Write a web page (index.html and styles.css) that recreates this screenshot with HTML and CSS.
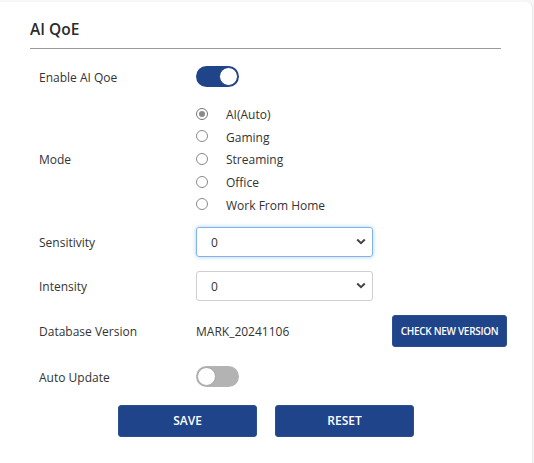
FILE: index.html
```html
<!DOCTYPE html>
<html>
<head>
<meta charset="utf-8">
<link rel="stylesheet" href="styles.css">
</head>
<body>
<div class="card">
  <div class="title">AI QoE</div>
  <div class="form">
    <div class="row r-enable">
      <div class="label">Enable AI Qoe</div>
      <div class="toggle on"><span class="knob"></span></div>
    </div>
    <div class="row r-mode">
      <div class="label">Mode</div>
      <div class="radios">
        <div class="opt"><span class="radio checked"></span><span class="txt">AI(Auto)</span></div>
        <div class="opt"><span class="radio"></span><span class="txt">Gaming</span></div>
        <div class="opt"><span class="radio"></span><span class="txt">Streaming</span></div>
        <div class="opt"><span class="radio"></span><span class="txt">Office</span></div>
        <div class="opt"><span class="radio"></span><span class="txt">Work From Home</span></div>
      </div>
    </div>
    <div class="row r-sens">
      <div class="label">Sensitivity</div>
      <div class="select focus"><span class="txt">0</span><svg width="10" height="7" viewBox="0 0 10 7"><path d="M1.2 1.5L5 5.2 8.8 1.5" fill="none" stroke="#444" stroke-width="2"/></svg></div>
    </div>
    <div class="row r-int">
      <div class="label">Intensity</div>
      <div class="select"><span class="txt">0</span><svg width="10" height="7" viewBox="0 0 10 7"><path d="M1.2 1.5L5 5.2 8.8 1.5" fill="none" stroke="#444" stroke-width="2"/></svg></div>
    </div>
    <div class="row r-db">
      <div class="label">Database Version</div>
      <div class="value">MARK_20241106</div>
      <button class="btn small">CHECK NEW VERSION</button>
    </div>
    <div class="row r-auto">
      <div class="label">Auto Update</div>
      <div class="toggle off"><span class="knob"></span></div>
    </div>
    <div class="actions">
      <button class="btn big">SAVE</button>
      <button class="btn big">RESET</button>
    </div>
  </div>
</div>
</body>
</html>
```
FILE: styles.css
```css
html, body {
  margin: 0;
  padding: 0;
  background: #f7f7f7;
  font-family: "Open Sans", "Noto Sans", sans-serif;
  color: #333;
}
.card {
  margin-top: 2px;
  width: 532px;
  min-height: 461px;
  background: #fff;
  border-top-right-radius: 6px;
  box-shadow: 1px 0 1px rgba(0,0,0,0.06);
  padding-top: 17px;
  box-sizing: border-box;
}
.title {
  margin: 0 31px 0 30px;
  font-size: 15.5px;
  font-weight: 600;
  line-height: 20px;
  padding-bottom: 9px;
  border-bottom: 1px solid #9a9a9a;
  color: #2b2b2b;
}
.form {
  display: flex;
  flex-direction: column;
}
.row {
  display: flex;
  align-items: center;
  padding-left: 39px;
  font-size: 12px;
}
.label {
  width: 157px;
  flex: none;
  line-height: 16px;
  padding-top: 3px;
}
.txt {
  display: inline-block;
  line-height: 16px;
  padding-top: 3px;
}
.r-enable { margin-top: 17px; height: 20px; }
.r-mode { margin-top: 16.5px; }
.r-sens { margin-top: 11.5px; height: 30px; }
.r-int { margin-top: 14px; height: 30px; }
.r-db { margin-top: 14px; height: 32px; }
.r-auto { margin-top: 19px; height: 21px; }

.toggle {
  width: 43px;
  height: 21px;
  border-radius: 11px;
  box-sizing: border-box;
  display: flex;
  align-items: center;
  padding: 0 1px;
}
.toggle.on { background: #1f4489; justify-content: flex-end; }
.toggle.off { background: #b3b3b3; justify-content: flex-start; }
.knob {
  width: 19px;
  height: 19px;
  border-radius: 50%;
  background: #fff;
  box-sizing: border-box;
}
.toggle.on .knob { border: 1px solid #1f4489; }
.toggle.off .knob { border: 1px solid #a8a8a8; }

.radios {
  display: flex;
  flex-direction: column;
}
.opt {
  height: 22.6px;
  display: flex;
  align-items: center;
}
.radio {
  width: 12px;
  height: 12px;
  border: 1px solid #8a8a8a;
  border-radius: 50%;
  box-sizing: border-box;
  margin-right: 18px;
  display: flex;
  align-items: center;
  justify-content: center;
  background: #fff;
}
.radio.checked { border-color: #777; }
.radio.checked::after {
  content: "";
  width: 6px;
  height: 6px;
  border-radius: 50%;
  background: #8a8a8a;
}

.select {
  width: 177px;
  height: 30px;
  box-sizing: border-box;
  border: 1px solid #cfcfcf;
  border-radius: 3px;
  display: flex;
  align-items: center;
  justify-content: space-between;
  padding: 0 6px 0 14px;
  font-size: 12px;
  color: #333;
}
.select.focus {
  border-color: #7fb4ea;
  box-shadow: 0 0 4px rgba(102, 170, 235, 0.55);
}

.value {
  width: 196px;
  flex: none;
  line-height: 16px;
  padding-top: 3px;
}
.btn {
  background: #1f4489;
  color: #fff;
  border: 1px solid #2b4f92;
  border-radius: 3px;
  font-family: "Open Sans", "Noto Sans", sans-serif;
  font-weight: 600;
  padding: 0;
  cursor: pointer;
}
.btn.small {
  width: 115px;
  height: 32px;
  font-size: 10px;
  letter-spacing: -0.3px;
}
.actions {
  margin-top: 18px;
  display: flex;
  justify-content: center;
  gap: 18px;
}
.btn.big {
  width: 139px;
  height: 32px;
  font-size: 12px;
}
```
